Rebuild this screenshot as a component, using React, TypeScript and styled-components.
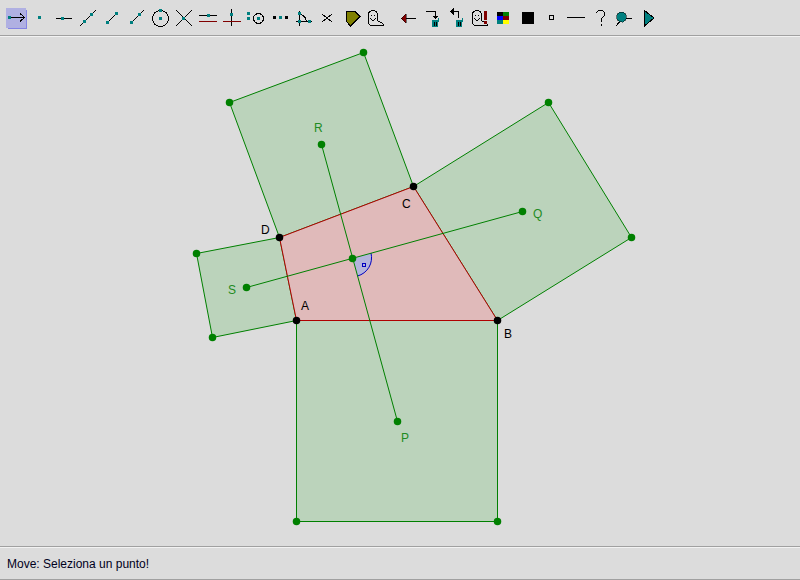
import React from 'react';
import styled, { createGlobalStyle } from 'styled-components';

const GlobalStyle = createGlobalStyle`
  html, body {
    margin: 0;
    padding: 0;
    height: 100%;
    background: #dcdcdc;
  }
  #root {
    height: 100%;
  }
`;

const Frame = styled.div`
  width: 800px;
  height: 580px;
  display: flex;
  flex-direction: column;
  background: #dcdcdc;
  font-family: 'Liberation Sans', Arial, sans-serif;
  overflow: hidden;
`;

const Toolbar = styled.div`
  height: 36px;
  flex-shrink: 0;
  display: flex;
  align-items: flex-start;
  padding: 6px 0 0 4px;
  box-sizing: border-box;
  border-bottom: 1px solid #a0a0a0;
`;

const ToolButton = styled.div`
  width: 24px;
  height: 24px;
  flex-shrink: 0;
`;

const ToolGap = styled.div`
  width: 8px;
  flex-shrink: 0;
`;

const IconSvg = styled.svg.attrs({ viewBox: '0 0 24 24' })`
  display: block;
  width: 24px;
  height: 24px;
  shape-rendering: crispEdges;
`;

const Canvas = styled.div`
  flex: 1;
  min-height: 0;
  border-top: 1px solid #f2f2f2;
`;

const Drawing = styled.svg`
  display: block;
  width: 800px;
  height: 508px;
`;

const StatusBar = styled.div`
  height: 34px;
  flex-shrink: 0;
  box-sizing: border-box;
  border-top: 1px solid #a0a0a0;
  border-bottom: 1px solid #a0a0a0;
  box-shadow: inset 0 1px 0 #f2f2f2;
  display: flex;
  align-items: center;
  padding: 1px 0 0 7px;
  font-size: 12px;
  color: #000020;
`;

const TEAL = '#008080';
const RED = '#800000';

// 3x3 handle, x is one right of its left edge
const Sq = ({ x, y, c = TEAL }: { x: number; y: number; c?: string }) => (
  <rect x={x - 1} y={y} width={3} height={3} fill={c} />
);

const Ln = ({ d, c = '#000' }: { d: string; c?: string }) => (
  <path d={d} fill="none" stroke={c} strokeWidth={1} />
);

const Ghost = () => (
  <g transform="translate(1 0)">
    <path
      d="M3.5 17 V9 Q3.5 4.5 8 4.5 Q12.5 4.5 12.5 9 V14 Q13 16 16 16.5 Q18.5 17 18.5 19.5 H7 Q4 19.5 3.5 17 Z"
      fill="#dcdcdc"
      stroke="#000"
    />
    <path d="M6 9.5 h1 M9 9.5 h1" stroke="#000" />
    <path d="M5.5 12.5 Q8 16 10.5 12.5" fill="none" stroke="#000" />
  </g>
);

const Trash = () => (
  <>
    <rect x={12} y={14} width={6} height={7} fill={TEAL} />
    <rect x={18} y={12} width={1} height={4} fill={TEAL} />
    <path d="M14.5 16 v4 M16.5 16 v4" stroke="#000" />
  </>
);

const icons: React.ReactNode[] = [
  // move
  <IconSvg key="move">
    <rect x={4} y={4} width={19} height={19} fill="#8484e4" />
    <rect x={2} y={2} width={20} height={20} fill="#b0b0e2" />
    <Ln d="M7 11.5 H20 M16 7.5 L20.5 11.5 L16 15.5" />
    <Sq x={5} y={10} />
  </IconSvg>,
  // point
  <IconSvg key="point">
    <Sq x={11} y={10} />
  </IconSvg>,
  // line
  <IconSvg key="line">
    <Ln d="M4 12.5 H20" />
    <Sq x={10} y={11} />
  </IconSvg>,
  <IconSvg key="through">
    <Ln d="M4 20 L20 4" />
    <Sq x={8} y={14} />
    <Sq x={15} y={7} />
  </IconSvg>,
  <IconSvg key="segment">
    <Ln d="M7.5 16.5 L16.5 7.5" />
    <Sq x={7} y={15} />
    <Sq x={16} y={6} />
  </IconSvg>,
  <IconSvg key="ray">
    <Ln d="M7.5 16.5 L20 4" />
    <Sq x={7} y={15} />
    <Sq x={15} y={7} />
  </IconSvg>,
  <IconSvg key="circle">
    <circle cx={12.5} cy={12.5} r={8} fill="none" stroke="#000" />
    <Sq x={12} y={3} />
    <Sq x={12} y={11} />
  </IconSvg>,
  <IconSvg key="intersect">
    <Ln d="M4 4 L20 20 M20 4 L4 20" />
    <Sq x={11} y={11} />
  </IconSvg>,
  <IconSvg key="parallel">
    <Ln d="M3 9.5 H21" />
    <Ln d="M3 15.5 H21" c={RED} />
    <Sq x={12} y={8} />
  </IconSvg>,
  <IconSvg key="perp">
    <Ln d="M11.5 3 V20" />
    <Ln d="M3 15.5 H21" c={RED} />
    <Sq x={11} y={7} />
  </IconSvg>,
  <IconSvg key="midcircle">
    <circle cx={14.5} cy={12.5} r={5} fill="none" stroke="#000" />
    <Sq x={4} y={6} />
    <Sq x={4} y={11} />
    <Sq x={14} y={11} />
  </IconSvg>,
  <IconSvg key="midpoint">
    <Sq x={6} y={10} c="#000" />
    <Sq x={12} y={10} />
    <Sq x={18} y={10} c="#000" />
  </IconSvg>,
  <IconSvg key="angle">
    <Ln d="M7.5 5 V20 M4 15.5 H20" />
    <path d="M7.5 8 Q13 9 14.5 15" fill="none" stroke="#000" />
    <Sq x={7} y={6} />
    <Sq x={7} y={14} />
    <Sq x={17} y={14} />
  </IconSvg>,
  <IconSvg key="cross">
    <Ln d="M6 8 L11 12 L6 16 M16 8 L11 12 L16 16" />
  </IconSvg>,
  <IconSvg key="polygon">
    <path d="M6.5 5.5 H15 L20 10.5 L10.5 20 L6.5 15.5 Z" fill="#808000" stroke="#000" />
  </IconSvg>,
  <IconSvg key="ghost">
    <Ghost />
  </IconSvg>,
  <IconSvg key="back">
    <Ln d="M9 12.5 H20" />
    <path d="M5 12.5 L10 8 V17 Z" fill={RED} stroke="#000" strokeWidth={0.5} />
  </IconSvg>,
  <IconSvg key="undo">
    <Ln d="M6 5.5 H15.5 V11" />
    <path d="M12.5 10 H18.5 L15.5 13 Z" fill="#000" />
    <Trash />
  </IconSvg>,
  <IconSvg key="redo">
    <Ln d="M9 5.5 H14.5 V12" />
    <path d="M6 5.5 L10 2 V9 Z" fill="#000" />
    <Trash />
  </IconSvg>,
  <IconSvg key="ghostwarn">
    <Ghost />
    <rect x={16} y={5} width={3} height={9} fill={RED} />
    <rect x={16} y={15} width={3} height={3} fill={RED} />
  </IconSvg>,
  <IconSvg key="colors">
    <rect x={5} y={6} width={6} height={4} fill="#000" />
    <rect x={11} y={6} width={6} height={4} fill="#008000" />
    <rect x={5} y={10} width={6} height={4} fill="#0000ff" />
    <rect x={11} y={10} width={6} height={4} fill={RED} />
    <rect x={5} y={14} width={6} height={4} fill={TEAL} />
    <rect x={11} y={14} width={6} height={4} fill="#ffff00" />
  </IconSvg>,
  <IconSvg key="fill">
    <rect x={6} y={6} width={12} height={12} fill="#000" />
  </IconSvg>,
  <IconSvg key="small">
    <rect x={9.5} y={9.5} width={4} height={4} fill="#dcdcdc" stroke="#000" />
  </IconSvg>,
  <IconSvg key="thin">
    <Ln d="M3 11.5 H21" />
  </IconSvg>,
  <IconSvg key="help">
    <path
      d="M8.5 7 Q9 4.5 12.5 4.5 Q16.5 4.5 16.5 8 Q16.5 10.5 14 12 Q13 13 13 16"
      fill="none"
      stroke="#000"
    />
    <path d="M13 18 V20" stroke="#000" />
  </IconSvg>,
  <IconSvg key="zoom">
    <Ln d="M4 20 L9 14 M11 12.5 H20" />
    <circle cx={9.5} cy={11} r={5} fill={TEAL} stroke="#000" strokeWidth={0.5} />
  </IconSvg>,
  <IconSvg key="play">
    <path d="M8.5 4.5 L18 12 L8.5 20 Z" fill={TEAL} stroke="#000" />
  </IconSvg>,
];

type Pt = [number, number];
const poly = (pts: Pt[]) => pts.map((p) => p.join(',')).join(' ');

const A: Pt = [296, 320];
const B: Pt = [497, 320];
const C: Pt = [413, 186];
const D: Pt = [279, 237];
const P: Pt = [397, 421];
const Q: Pt = [522, 211];
const R: Pt = [321, 144];
const S: Pt = [246, 287];
const M: Pt = [352, 258];

const GREEN = '#008000';
const squares: Pt[][] = [
  [A, [296, 521], [497, 521], B],
  [B, [631, 237], [548, 102], C],
  [C, [363, 52], [229, 102], D],
  [D, [196, 253], [212, 337], A],
];
const greenPoints: Pt[] = [
  [296, 521],
  [497, 521],
  [631, 237],
  [548, 102],
  [363, 52],
  [229, 102],
  [196, 253],
  [212, 337],
  P,
  Q,
  R,
  S,
  M,
];
const blackPoints: Pt[] = [A, B, C, D];
const labels: { t: string; x: number; y: number; c: string }[] = [
  { t: 'A', x: 300.5, y: 309, c: '#000' },
  { t: 'B', x: 503.5, y: 337, c: '#000' },
  { t: 'C', x: 401.5, y: 207, c: '#000' },
  { t: 'D', x: 260.5, y: 233, c: '#000' },
  { t: 'P', x: 400.5, y: 441, c: '#228b22' },
  { t: 'Q', x: 532.5, y: 217, c: '#228b22' },
  { t: 'R', x: 313.5, y: 131, c: '#228b22' },
  { t: 'S', x: 227.5, y: 293, c: '#228b22' },
];

const App: React.FC = () => (
  <Frame>
    <GlobalStyle />
    <Toolbar>
      {icons.map((icon, i) => (
        <React.Fragment key={i}>
          {i === 16 && <ToolGap />}
          <ToolButton>{icon}</ToolButton>
        </React.Fragment>
      ))}
    </Toolbar>
    <Canvas>
      <Drawing viewBox="-0.5 36.5 800 508">
        {squares.map((s, i) => (
          <polygon key={i} points={poly(s)} fill="#bbd3bb" stroke={GREEN} strokeWidth={1} />
        ))}
        <polygon points={poly([A, B, C, D])} fill="#e0baba" stroke="#b00000" strokeWidth={1} />
        <path d="M352 258 L370.5 252.5 A19 19 0 0 1 357 275.5 Z" fill="#b4b4dc" />
        <path d="M370.5 252.5 A19 19 0 0 1 357 275.5" fill="none" stroke="#0000c0" />
        <rect
          x={362}
          y={263}
          width={3}
          height={3}
          fill="none"
          stroke="#0000c0"
          shapeRendering="crispEdges"
        />
        <line x1={P[0]} y1={P[1]} x2={R[0]} y2={R[1]} stroke={GREEN} />
        <line x1={Q[0]} y1={Q[1]} x2={S[0]} y2={S[1]} stroke={GREEN} />
        {greenPoints.map((p, i) => (
          <circle key={i} cx={p[0]} cy={p[1]} r={3.75} fill={GREEN} />
        ))}
        {blackPoints.map((p, i) => (
          <circle key={i} cx={p[0]} cy={p[1]} r={3.75} fill="#000" />
        ))}
        {labels.map((l) => (
          <text
            key={l.t}
            x={l.x}
            y={l.y}
            fill={l.c}
            fontSize={12}
            fontFamily="'Liberation Sans', Arial, sans-serif"
          >
            {l.t}
          </text>
        ))}
      </Drawing>
    </Canvas>
    <StatusBar>Move: Seleziona un punto!</StatusBar>
  </Frame>
);

export default App;
